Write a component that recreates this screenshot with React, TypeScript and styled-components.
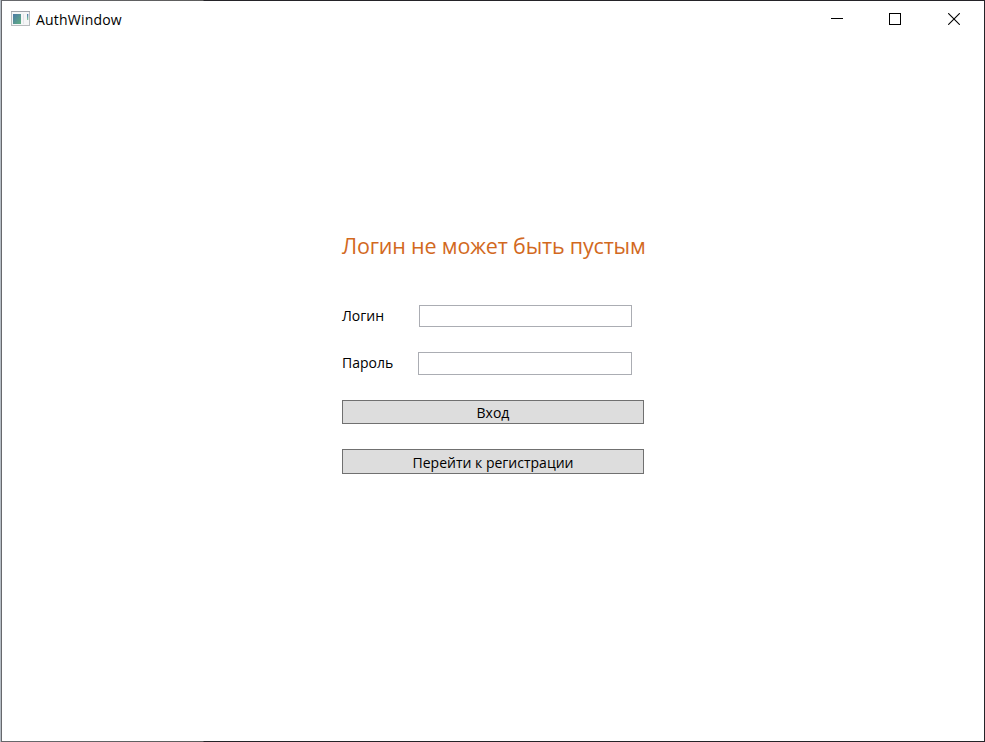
import React from "react";
import styled, { createGlobalStyle } from "styled-components";

const GlobalStyle = createGlobalStyle`
  *, *::before, *::after { box-sizing: border-box; }
  html, body { margin: 0; padding: 0; background: #fff; overflow: hidden; }
`;

const Desktop = styled.div`
  width: 985px;
  height: 742px;
  padding-left: 1px;
  background: #b4bcc4;
  font-family: "Open Sans", "Noto Sans", sans-serif;
  font-size: 14px;
  color: #000;
`;

const Frame = styled.div`
  width: 984px;
  height: 742px;
  padding: 1px;
  background: linear-gradient(to right, #67686c 0, #5c5c5c 202px, #242328 203px);
`;

const Surface = styled.div`
  height: 740px;
  background: #fff;
  display: flex;
  flex-direction: column;
`;

const TitleBar = styled.header`
  height: 37px;
  display: flex;
  align-items: center;
  padding: 0 1px 0 9px;
`;

const AppIcon = styled.svg`
  width: 19px;
  height: 15px;
  margin: 0 6px 2px 0;
  flex: none;
`;

const Caption = styled.span`
  flex: 1;
  line-height: 20px;
  letter-spacing: 0.2px;
  white-space: nowrap;
`;

const WindowButton = styled.button`
  width: 58.5px;
  height: 35px;
  align-self: flex-start;
  padding: 0;
  border: 0;
  background: transparent;
  display: flex;
  align-items: center;
  justify-content: center;
`;

const Glyph = styled.svg`
  width: 12px;
  height: 12px;
  display: block;
`;

const Form = styled.form`
  width: 304px;
  margin: 193px 0 0 340px;
  display: flex;
  flex-direction: column;
`;

const ErrorMessage = styled.div`
  height: 30px;
  margin-bottom: 44px;
  line-height: 30px;
  font-size: 21.5px;
  letter-spacing: -0.18px;
  color: #d2691e;
  white-space: nowrap;
`;

const Field = styled.label`
  display: flex;
  align-items: flex-start;
  width: 290px;
  margin-bottom: 25px;
`;

const FieldName = styled.span`
  flex: 1;
  padding-top: 1px;
  line-height: 20px;
`;

const TextInput = styled.input<{ $w: number; $h: number }>`
  width: ${(p) => p.$w}px;
  height: ${(p) => p.$h}px;
  padding: 0 3px;
  border: 1px solid #abadb3;
  border-radius: 0;
  background: #fff;
  font: inherit;
  outline: none;
`;

const ActionButton = styled.button<{ $h: number; $gap?: number; $top: number }>`
  width: 302px;
  height: ${(p) => p.$h}px;
  margin: 0 0 ${(p) => p.$gap ?? 0}px;
  padding: ${(p) => p.$top}px 0 0;
  border: 1px solid #707070;
  border-radius: 0;
  background: #ddd;
  color: #000;
  font: inherit;
  line-height: 20px;
`;

export default function App() {
  return (
    <Desktop>
      <GlobalStyle />
      <Frame>
        <Surface>
          <TitleBar>
            <AppIcon viewBox="0 0 19 15">
              <defs>
                <linearGradient id="pane" x1="0" y1="0" x2="1" y2="1">
                  <stop offset="0" stopColor="#4c79a6" />
                  <stop offset="1" stopColor="#61b082" />
                </linearGradient>
                <linearGradient id="strip" x1="0" y1="0" x2="0" y2="1">
                  <stop offset="0" stopColor="#4b78ae" />
                  <stop offset="1" stopColor="#8bcf9d" />
                </linearGradient>
              </defs>
              <rect x="0.5" y="0.5" width="18" height="14" fill="#f5f6f7" stroke="#b9bcbf" />
              <path d="M0 0.5h19" stroke="#a1a5ab" />
              <rect x="2" y="3" width="8" height="10" fill="url(#pane)" />
              <path d="M12.5 3v10" stroke="#e4e5e8" />
              <rect x="16" y="3" width="1.3" height="6" fill="url(#strip)" />
            </AppIcon>
            <Caption>AuthWindow</Caption>
            <WindowButton aria-label="Minimize">
              <Glyph viewBox="0 0 12 12" shapeRendering="crispEdges">
                <path d="M0 5.5h12" stroke="#000" />
              </Glyph>
            </WindowButton>
            <WindowButton aria-label="Maximize">
              <Glyph viewBox="0 0 12 12" shapeRendering="crispEdges">
                <rect x="0.5" y="0.5" width="11" height="11" fill="none" stroke="#000" />
              </Glyph>
            </WindowButton>
            <WindowButton aria-label="Close">
              <Glyph viewBox="0 0 12 12">
                <path d="M0.2 0.2l11.6 11.6M11.8 0.2L0.2 11.8" stroke="#000" strokeWidth="1.1" />
              </Glyph>
            </WindowButton>
          </TitleBar>
          <Form onSubmit={(e) => e.preventDefault()}>
            <ErrorMessage>Логин не может быть пустым</ErrorMessage>
            <Field>
              <FieldName>Логин</FieldName>
              <TextInput $w={213} $h={22} type="text" />
            </Field>
            <Field>
              <FieldName>Пароль</FieldName>
              <TextInput $w={214} $h={23} type="password" />
            </Field>
            <ActionButton $h={24} $gap={25} $top={1}>Вход</ActionButton>
            <ActionButton type="button" $h={25} $top={2}>Перейти к регистрации</ActionButton>
          </Form>
        </Surface>
      </Frame>
    </Desktop>
  );
}
